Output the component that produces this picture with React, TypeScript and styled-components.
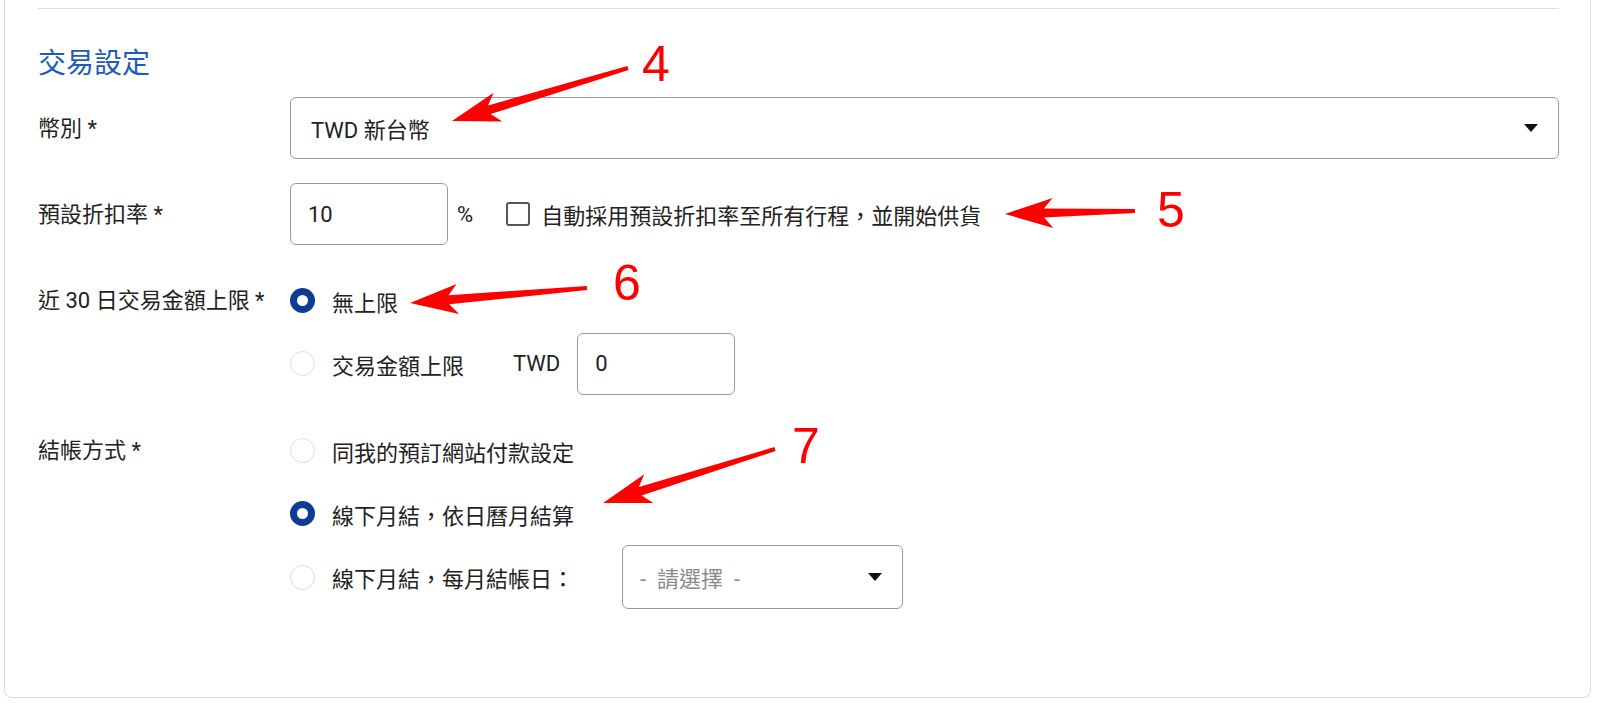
import styled, { createGlobalStyle } from "styled-components";

const GlobalStyle = createGlobalStyle`
  body {
    margin: 0;
    background: #ffffff;
    font-family: Roboto, "Noto Sans CJK TC", sans-serif;
    color: #222222;
  }
`;

const Page = styled.div`
  position: relative;
  width: 1600px;
  height: 706px;
  overflow: hidden;
  box-sizing: border-box;
  padding: 0 9px 0 4px;
`;

const Card = styled.section`
  border: 1px solid #dcdcdc;
  border-top: none;
  border-radius: 0 0 8px 8px;
  padding: 8px 31px 88px 33px;
`;

const Divider = styled.div`
  height: 1px;
  background: #dddddd;
`;

const Title = styled.h2`
  margin: 35px 0 13px;
  font-size: 28px;
  line-height: 40px;
  font-weight: 400;
  color: #1c5cb8;
`;

const Form = styled.div`
  display: flex;
  flex-direction: column;
  gap: 24px;
`;

const Row = styled.div`
  display: grid;
  grid-template-columns: 252px 1fr;
  align-items: start;
`;

const Label = styled.div`
  font-size: 22px;
  line-height: 60px;
  padding-top: 2px;
  white-space: nowrap;
`;

const Control = styled.div`
  display: flex;
  align-items: center;
`;

const Options = styled.div`
  display: flex;
  flex-direction: column;
`;

const Select = styled.div<{ width?: number; gap?: number; placeholder?: boolean }>`
  box-sizing: border-box;
  width: ${(p) => (p.width ? `${p.width}px` : "100%")};
  height: ${(p) => (p.width ? "64px" : "62px")};
  margin-left: ${(p) => p.gap ?? 0}px;
  border: 1px solid #9a9a9a;
  border-radius: 6px;
  padding: 0 20px 0 ${(p) => (p.placeholder ? "17px" : "20px")};
  display: flex;
  align-items: center;
  justify-content: space-between;
  font-size: 22px;
  color: ${(p) => (p.placeholder ? "#8a8a8a" : "#222222")};
  background: #ffffff;
  white-space: pre;
`;

const TextField = styled.input<{ gap?: number }>`
  box-sizing: border-box;
  width: 158px;
  height: 62px;
  margin-left: ${(p) => p.gap ?? 0}px;
  border: 1px solid #9a9a9a;
  border-radius: 6px;
  padding: 0 17px;
  font-family: inherit;
  font-size: 22px;
  color: #222222;
  background: #ffffff;
  outline: none;
`;

const Unit = styled.span<{ gap: number }>`
  margin-left: ${(p) => p.gap}px;
  font-size: 22px;
`;

const CheckLabel = styled.label`
  display: flex;
  align-items: center;
  margin-left: 33px;
  font-size: 22px;
`;

const CheckBox = styled.span`
  box-sizing: border-box;
  width: 24px;
  height: 24px;
  border: 2px solid #565656;
  border-radius: 3px;
  margin-right: 11px;
`;

const OptionRow = styled.div`
  display: flex;
  align-items: center;
  min-height: 63px;
`;

const Radio = styled.span<{ checked?: boolean }>`
  box-sizing: border-box;
  flex: none;
  width: 25px;
  height: 25px;
  border-radius: 50%;
  background: #ffffff;
  border: ${(p) => (p.checked ? "7.5px solid #0c3d92" : "1px solid #dedede")};
`;

const OptionText = styled.span`
  margin-left: 17px;
  font-size: 22px;
  white-space: nowrap;
`;

const Overlay = styled.svg`
  position: absolute;
  left: 0;
  top: 0;
  pointer-events: none;
`;

const Caret = () => (
  <svg width="14" height="8" viewBox="0 0 14 8">
    <path d="M0 0 H14 L7 8 Z" fill="#111111" />
  </svg>
);

type Pt = [number, number];

const arrows: { n: string; tail: Pt; tip: Pt; num: Pt }[] = [
  { n: "4", tail: [628, 68], tip: [452, 121], num: [642, 81] },
  { n: "5", tail: [1135, 211], tip: [1005, 214], num: [1157, 227] },
  { n: "6", tail: [587, 288], tip: [410, 303], num: [613, 300] },
  { n: "7", tail: [775, 449], tip: [603, 503], num: [792, 463] },
];

// tapered red arrow, barbed head
function arrowPoints(t: Pt, p: Pt) {
  const headLen = 48;
  const headW = 30;
  const w0 = 4;
  const w1 = 9;
  const dx = p[0] - t[0];
  const dy = p[1] - t[1];
  const len = Math.hypot(dx, dy);
  const ux = dx / len;
  const uy = dy / len;
  const nx = -uy;
  const ny = ux;
  const bx = p[0] - ux * headLen;
  const by = p[1] - uy * headLen;
  const jx = bx + ux * 9;
  const jy = by + uy * 9;
  const pts: Pt[] = [
    [t[0] + (nx * w0) / 2, t[1] + (ny * w0) / 2],
    [jx + (nx * w1) / 2, jy + (ny * w1) / 2],
    [bx + (nx * headW) / 2, by + (ny * headW) / 2],
    p,
    [bx - (nx * headW) / 2, by - (ny * headW) / 2],
    [jx - (nx * w1) / 2, jy - (ny * w1) / 2],
    [t[0] - (nx * w0) / 2, t[1] - (ny * w0) / 2],
  ];
  return pts.map((q) => `${q[0].toFixed(1)},${q[1].toFixed(1)}`).join(" ");
}

export default function App() {
  return (
    <>
      <GlobalStyle />
      <Page>
        <Card>
          <Divider />
          <Title>交易設定</Title>
          <Form>
            <Row>
              <Label>幣別 *</Label>
              <Select>
                <span>TWD 新台幣</span>
                <Caret />
              </Select>
            </Row>
            <Row>
              <Label>預設折扣率 *</Label>
              <Control>
                <TextField defaultValue="10" readOnly />
                <Unit gap={9}>%</Unit>
                <CheckLabel>
                  <CheckBox />
                  自動採用預設折扣率至所有行程，並開始供貨
                </CheckLabel>
              </Control>
            </Row>
            <Row>
              <Label>近 30 日交易金額上限 *</Label>
              <Options>
                <OptionRow>
                  <Radio checked />
                  <OptionText>無上限</OptionText>
                </OptionRow>
                <OptionRow>
                  <Radio />
                  <OptionText>交易金額上限</OptionText>
                  <Unit gap={49}>TWD</Unit>
                  <TextField gap={17} defaultValue="0" readOnly />
                </OptionRow>
              </Options>
            </Row>
            <Row>
              <Label>結帳方式 *</Label>
              <Options>
                <OptionRow>
                  <Radio />
                  <OptionText>同我的預訂網站付款設定</OptionText>
                </OptionRow>
                <OptionRow>
                  <Radio checked />
                  <OptionText>線下月結，依日曆月結算</OptionText>
                </OptionRow>
                <OptionRow>
                  <Radio />
                  <OptionText>線下月結，每月結帳日：</OptionText>
                  <Select width={281} gap={48} placeholder>
                    <span>-  請選擇  -</span>
                    <Caret />
                  </Select>
                </OptionRow>
              </Options>
            </Row>
          </Form>
        </Card>
        <Overlay width={1600} height={706}>
          {arrows.map((a) => (
            <g key={a.n}>
              <polygon points={arrowPoints(a.tail, a.tip)} fill="#ff0000" />
              <text
                x={a.num[0]}
                y={a.num[1]}
                fill="#ff0000"
                fontSize={50}
                fontFamily='"Liberation Sans", Arial, sans-serif'
              >
                {a.n}
              </text>
            </g>
          ))}
        </Overlay>
      </Page>
    </>
  );
}
